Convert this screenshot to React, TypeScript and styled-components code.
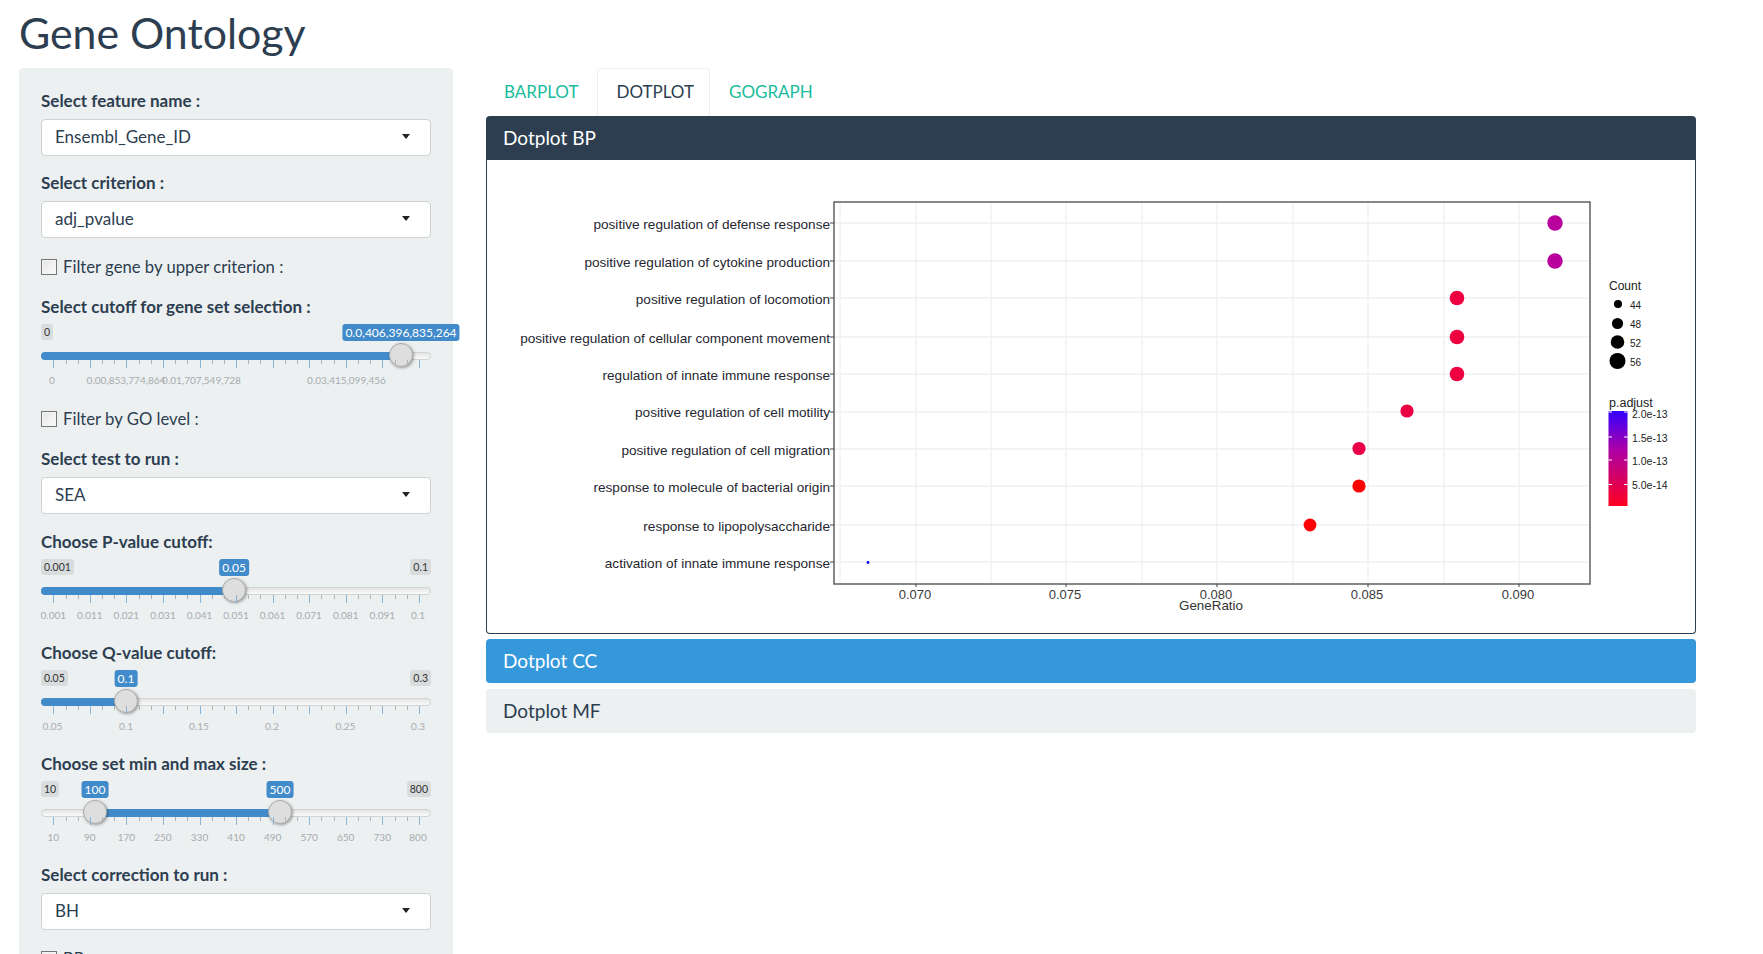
import React from 'react';
import styled, { createGlobalStyle } from 'styled-components';

const Global = createGlobalStyle`
  html, body { margin: 0; padding: 0; background: #fff; height: 954px; overflow: hidden; }
  body { font-family: Lato, "Open Sans", sans-serif; color: #2c3e50; }
  * { box-sizing: border-box; }
`;

const Page = styled.div`
  padding: 0 19px;
`;
const Title = styled.h2`
  margin: 0;
  height: 68px;
  padding-top: 11px;
  font-size: 42.8px;
  line-height: 44px;
  font-weight: 400;
  color: #2c3e50;
`;
const Columns = styled.div`
  display: flex;
  gap: 33px;
  align-items: flex-start;
`;
const Sidebar = styled.aside`
  width: 434px;
  height: 900px;
  flex: none;
  padding: 23px 22px;
  background: #ecf0f1;
  border-radius: 4px;
`;
const Field = styled.div<{ $mb: number }>`
  margin-bottom: ${p => p.$mb}px;
`;
const Label = styled.div`
  font-size: 17px;
  font-weight: 700;
  line-height: 20px;
  height: 21px;
  margin-bottom: 7px;
  color: #2c3e50;
`;
const SelectBox = styled.div`
  height: 37px;
  padding: 0 12px 2px 13px;
  display: flex;
  align-items: center;
  justify-content: space-between;
  background: #fff;
  border: 1px solid #cfd2d3;
  border-radius: 4px;
  font-size: 17px;
  color: #2c3e50;
`;
const Caret = styled.span`
  width: 0;
  height: 0;
  margin-right: 8px;
  border-left: 4.5px solid transparent;
  border-right: 4.5px solid transparent;
  border-top: 5px solid #222;
`;
const CheckRow = styled.label<{ $mb: number }>`
  display: flex;
  align-items: center;
  gap: 6px;
  height: 21px;
  margin-bottom: ${p => p.$mb}px;
  font-size: 16.7px;
  color: #2c3e50;
`;
const CheckInput = styled.input`
  appearance: none;
  width: 16px;
  height: 16px;
  margin: 0;
  background: linear-gradient(135deg, #e6e6e6, #fafafa);
  border: 1px solid #767676;
  box-shadow: inset 0 0 0 1px #f4f4f4;
`;

const SliderWrap = styled.div`
  height: 64px;
  margin: -1px 0 20px;
`;
const BadgeRow = styled.div`
  position: relative;
  height: 17px;
  margin-bottom: 11px;
`;
const MinBadge = styled.span<{ $side: 'left' | 'right' }>`
  position: absolute;
  top: 0;
  ${p => p.$side}: 0;
  padding: 0 3px;
  height: 16px;
  line-height: 16px;
  font-size: 10.5px;
  color: #333;
  background: #d8dcdd;
  border-radius: 3px;
`;
const ValueBadge = styled.span`
  position: absolute;
  top: 0;
  transform: translateX(-50%);
  padding: 0 3px;
  height: 17px;
  line-height: 18px;
  font-size: 12px;
  color: #fff;
  background: #428bca;
  border-radius: 3px;
  white-space: nowrap;
`;
const Track = styled.div`
  position: relative;
  height: 8px;
  background: linear-gradient(#e4e4e4, #fbfbfb);
  border: 1px solid #d0d4d5;
  border-radius: 4px;
`;
const TrackFill = styled.div`
  position: absolute;
  top: -1px;
  height: 8px;
  background: #428bca;
  border-radius: 4px;
`;
const Handle = styled.div`
  position: absolute;
  top: -10px;
  width: 24px;
  height: 24px;
  transform: translateX(-50%);
  background: #dedede;
  border: 1px solid #ababab;
  border-radius: 50%;
  box-shadow: 1px 1px 3px rgba(0, 0, 0, 0.35);
`;
const TickRow = styled.div`
  position: relative;
  height: 8px;
`;
const Tick = styled.i<{ $major: boolean }>`
  position: absolute;
  top: 0;
  width: 1px;
  height: ${p => (p.$major ? 8 : 4)}px;
  background: ${p => (p.$major ? '#8ab4d6' : '#b4b4b4')};
`;
const TickLabels = styled.div`
  position: relative;
  height: 14px;
  margin-top: 5px;
`;
const TickLabel = styled.span`
  position: absolute;
  top: 0;
  transform: translateX(-50%);
  font-size: 10px;
  line-height: 14px;
  color: #a6acaf;
  white-space: nowrap;
`;

const Main = styled.main`
  width: 1210px;
  flex: none;
`;
const Tabs = styled.nav`
  display: flex;
  height: 48px;
`;
const TabItem = styled.div<{ $pad: string; $active?: boolean }>`
  height: 48px;
  padding: ${p => p.$pad};
  line-height: 46px;
  font-size: 17px;
  color: ${p => (p.$active ? '#2c3e50' : '#18bc9c')};
  border: 1px solid ${p => (p.$active ? '#ecf0f1' : 'transparent')};
  border-bottom: none;
  border-radius: 4px 4px 0 0;
`;
const tones = { dark: '#2c3e50', blue: '#3498db', light: '#ecf0f1' };
const PanelHeader = styled.div<{ $tone: 'dark' | 'blue' | 'light'; $mt: number }>`
  height: 44px;
  padding-left: 17px;
  line-height: 44px;
  font-size: 19px;
  color: ${p => (p.$tone === 'light' ? '#2c3e50' : '#fff')};
  background: ${p => tones[p.$tone]};
  border-radius: ${p => (p.$tone === 'dark' ? '4px 4px 0 0' : '4px')};
  margin-top: ${p => p.$mt}px;
`;
const PanelBody = styled.div`
  height: 474px;
  border: 1px solid #2c3e50;
  border-top: none;
  border-radius: 0 0 4px 4px;
  background: #fff;
`;
const PlotSvg = styled.svg`
  display: block;
  width: 1208px;
  height: 473px;
`;

type TickSpec = { at: number; text: string };
type SliderProps = {
  min: string;
  max?: string;
  values: { at: number; text: string }[];
  range?: boolean;
  labels: TickSpec[];
};

const majors = Array.from({ length: 10 }, (_, i) => 12.3 + 36.55 * i).concat(377.5);
const minors = Array.from({ length: 9 }, (_, i) => 12.3 + 36.55 * i).flatMap(x => [x + 12.2, x + 24.4]).concat([377.5 - 24, 377.5 - 12]);

const Slider = ({ min, max, values, range, labels }: SliderProps) => {
  const left = range ? values[0].at : 0;
  const right = range ? values[1].at : values[0].at;
  return (
    <SliderWrap>
      <BadgeRow>
        <MinBadge $side="left">{min}</MinBadge>
        {max && <MinBadge $side="right">{max}</MinBadge>}
        {values.map(v => (
          <ValueBadge key={v.text} style={{ left: v.at }}>{v.text}</ValueBadge>
        ))}
      </BadgeRow>
      <Track>
        <TrackFill style={{ left: left - 1, width: right - left }} />
        {values.map(v => (
          <Handle key={v.text} style={{ left: v.at - 1 }} />
        ))}
      </Track>
      <TickRow>
        {majors.map(x => <Tick key={x} $major style={{ left: x }} />)}
        {minors.map(x => <Tick key={x} $major={false} style={{ left: x }} />)}
      </TickRow>
      <TickLabels>
        {labels.map(l => <TickLabel key={l.text} style={{ left: l.at }}>{l.text}</TickLabel>)}
      </TickLabels>
    </SliderWrap>
  );
};

const Select = ({ label, value, mb = 18 }: { label: string; value: string; mb?: number }) => (
  <Field $mb={mb}>
    <Label>{label}</Label>
    <SelectBox>{value}<Caret /></SelectBox>
  </Field>
);

const seq = (texts: string[]) => texts.map((text, i) => ({ at: i === 10 ? 377 : 12.3 + 36.55 * i, text }));

const rows = [
  { t: 'positive regulation of defense response', y: 223, ly: 224.3 },
  { t: 'positive regulation of cytokine production', y: 261, ly: 262.3 },
  { t: 'positive regulation of locomotion', y: 298, ly: 299.3 },
  { t: 'positive regulation of cellular component movement', y: 337, ly: 338.3 },
  { t: 'regulation of innate immune response', y: 374, ly: 375.3 },
  { t: 'positive regulation of cell motility', y: 412, ly: 412.3 },
  { t: 'positive regulation of cell migration', y: 449, ly: 450.3 },
  { t: 'response to molecule of bacterial origin', y: 486, ly: 487.3 },
  { t: 'response to lipopolysaccharide', y: 525, ly: 526.3 },
  { t: 'activation of innate immune response', y: 562, ly: 563.3 },
];
const dots = [
  { x: 1555, y: 223, r: 7.7, c: '#b8009c' },
  { x: 1555, y: 261, r: 7.7, c: '#b8009c' },
  { x: 1457, y: 298, r: 7.3, c: '#ee0040' },
  { x: 1457, y: 337, r: 7.3, c: '#ee0040' },
  { x: 1457, y: 374, r: 7.3, c: '#ee0040' },
  { x: 1407, y: 411, r: 6.6, c: '#ec0044' },
  { x: 1359, y: 448.5, r: 6.6, c: '#ea0048' },
  { x: 1359, y: 486, r: 6.6, c: '#ff0000' },
  { x: 1310, y: 525, r: 6.4, c: '#ff0006' },
  { x: 868, y: 562.5, r: 1.4, c: '#0000ff' },
];
const xMajor = [{ x: 916, t: '0.070' }, { x: 1066, t: '0.075' }, { x: 1217, t: '0.080' }, { x: 1368, t: '0.085' }, { x: 1519, t: '0.090' }];
const xMinor = [840, 991, 1142, 1293, 1444];

const DotPlot = () => (
  <PlotSvg viewBox="487 160 1208 473">
    <defs>
      <linearGradient id="padj" x1="0" y1="0" x2="0" y2="1">
        <stop offset="0" stopColor="#3300ff" />
        <stop offset="0.4" stopColor="#aa00a8" />
        <stop offset="1" stopColor="#ff0020" />
      </linearGradient>
    </defs>
    <g stroke="#f1f1f1" strokeWidth="1.4">
      {xMajor.map(m => <line key={m.x} x1={m.x} x2={m.x} y1={202} y2={584} />)}
      {xMinor.map(x => <line key={x} x1={x} x2={x} y1={202} y2={584} />)}
      {rows.map(r => <line key={r.t} x1={834} x2={1590} y1={r.y} y2={r.y} />)}
    </g>
    <rect x="834" y="202" width="756" height="382" fill="none" stroke="#555" strokeWidth="1.4" />
    <g stroke="#444" strokeWidth="1">
      {rows.map(r => <line key={r.t} x1={830} x2={834} y1={r.y} y2={r.y} />)}
      {xMajor.map(m => <line key={m.x} x1={m.x} x2={m.x} y1={584} y2={587} />)}
    </g>
    <g fontFamily='"Liberation Sans", Arial, sans-serif' fontSize="13.6" fill="#262630" textAnchor="end">
      {rows.map(r => <text key={r.t} x={830} y={r.ly + 4.5}>{r.t}</text>)}
    </g>
    <g fontFamily='"Liberation Sans", Arial, sans-serif' fontSize="13" fill="#3a3a3a" textAnchor="middle">
      {xMajor.map(m => <text key={m.x} x={m.x - 1} y={598.8}>{m.t}</text>)}
      <text x={1211} y={610} fontSize="13.4" fill="#333">GeneRatio</text>
    </g>
    {dots.map(d => <circle key={`${d.x}-${d.y}`} cx={d.x} cy={d.y} r={d.r} fill={d.c} />)}
    <g fontFamily='"Liberation Sans", Arial, sans-serif' fill="#222">
      <text x="1609" y="290" fontSize="12">Count</text>
      <text x="1609" y="407" fontSize="12.5">p.adjust</text>
      <g fontSize="10">
        <text x="1630" y="309">44</text>
        <text x="1630" y="328">48</text>
        <text x="1630" y="346.5">52</text>
        <text x="1630" y="366">56</text>
      </g>
      <g fontSize="10.5">
        <text x="1632" y="418">2.0e-13</text>
        <text x="1632" y="442">1.5e-13</text>
        <text x="1632" y="465">1.0e-13</text>
        <text x="1632" y="489">5.0e-14</text>
      </g>
    </g>
    <circle cx="1618" cy="304" r="4" fill="#000" />
    <circle cx="1617.5" cy="323.5" r="5.6" fill="#000" />
    <circle cx="1617.5" cy="342" r="6.8" fill="#000" />
    <circle cx="1617.5" cy="361" r="8" fill="#000" />
    <rect x="1608.5" y="411" width="19" height="95" fill="url(#padj)" />
    <g stroke="#fff" strokeWidth="1">
      {[412, 437, 460, 484.5].map(y => (
        <g key={y}>
          <line x1="1608.5" x2="1612" y1={y} y2={y} />
          <line x1="1624" x2="1627.5" y1={y} y2={y} />
        </g>
      ))}
    </g>
  </PlotSvg>
);

export default function App() {
  return (
    <Page>
      <Global />
      <Title>Gene Ontology</Title>
      <Columns>
        <Sidebar>
          <Select label="Select feature name :" value="Ensembl_Gene_ID" mb={17} />
          <Select label="Select criterion :" value="adj_pvalue" />
          <CheckRow $mb={20}><CheckInput type="checkbox" />Filter gene by upper criterion :</CheckRow>
          <Label>Select cutoff for gene set selection :</Label>
          <Slider
            min="0"
            values={[{ at: 360, text: '0.0,406,396,835,264' }]}
            labels={[
              { at: 11, text: '0' },
              { at: 85, text: '0.00,853,774,864' },
              { at: 160.5, text: '0.01,707,549,728' },
              { at: 305.5, text: '0.03,415,099,456' },
            ]}
          />
          <CheckRow $mb={20}><CheckInput type="checkbox" />Filter by GO level :</CheckRow>
          <Select label="Select test to run :" value="SEA" />
          <Label>Choose P-value cutoff:</Label>
          <Slider
            min="0.001"
            max="0.1"
            values={[{ at: 193, text: '0.05' }]}
            labels={seq(['0.001', '0.011', '0.021', '0.031', '0.041', '0.051', '0.061', '0.071', '0.081', '0.091', '0.1'])}
          />
          <Label>Choose Q-value cutoff:</Label>
          <Slider
            min="0.05"
            max="0.3"
            values={[{ at: 85, text: '0.1' }]}
            labels={[
              { at: 11.5, text: '0.05' },
              { at: 85, text: '0.1' },
              { at: 158, text: '0.15' },
              { at: 231, text: '0.2' },
              { at: 304.5, text: '0.25' },
              { at: 377, text: '0.3' },
            ]}
          />
          <Label>Choose set min and max size :</Label>
          <Slider
            min="10"
            max="800"
            range
            values={[{ at: 54, text: '100' }, { at: 239, text: '500' }]}
            labels={seq(['10', '90', '170', '250', '330', '410', '490', '570', '650', '730', '800'])}
          />
          <Select label="Select correction to run :" value="BH" />
          <CheckRow $mb={0}><CheckInput type="checkbox" />BP</CheckRow>
        </Sidebar>
        <Main>
          <Tabs>
            <TabItem $pad="0 18px 0 17px">BARPLOT</TabItem>
            <TabItem $pad="0 15px 0 18px" $active>DOTPLOT</TabItem>
            <TabItem $pad="0 18px 0 18px">GOGRAPH</TabItem>
          </Tabs>
          <PanelHeader $tone="dark" $mt={0}>Dotplot BP</PanelHeader>
          <PanelBody><DotPlot /></PanelBody>
          <PanelHeader $tone="blue" $mt={5}>Dotplot CC</PanelHeader>
          <PanelHeader $tone="light" $mt={6}>Dotplot MF</PanelHeader>
        </Main>
      </Columns>
    </Page>
  );
}
